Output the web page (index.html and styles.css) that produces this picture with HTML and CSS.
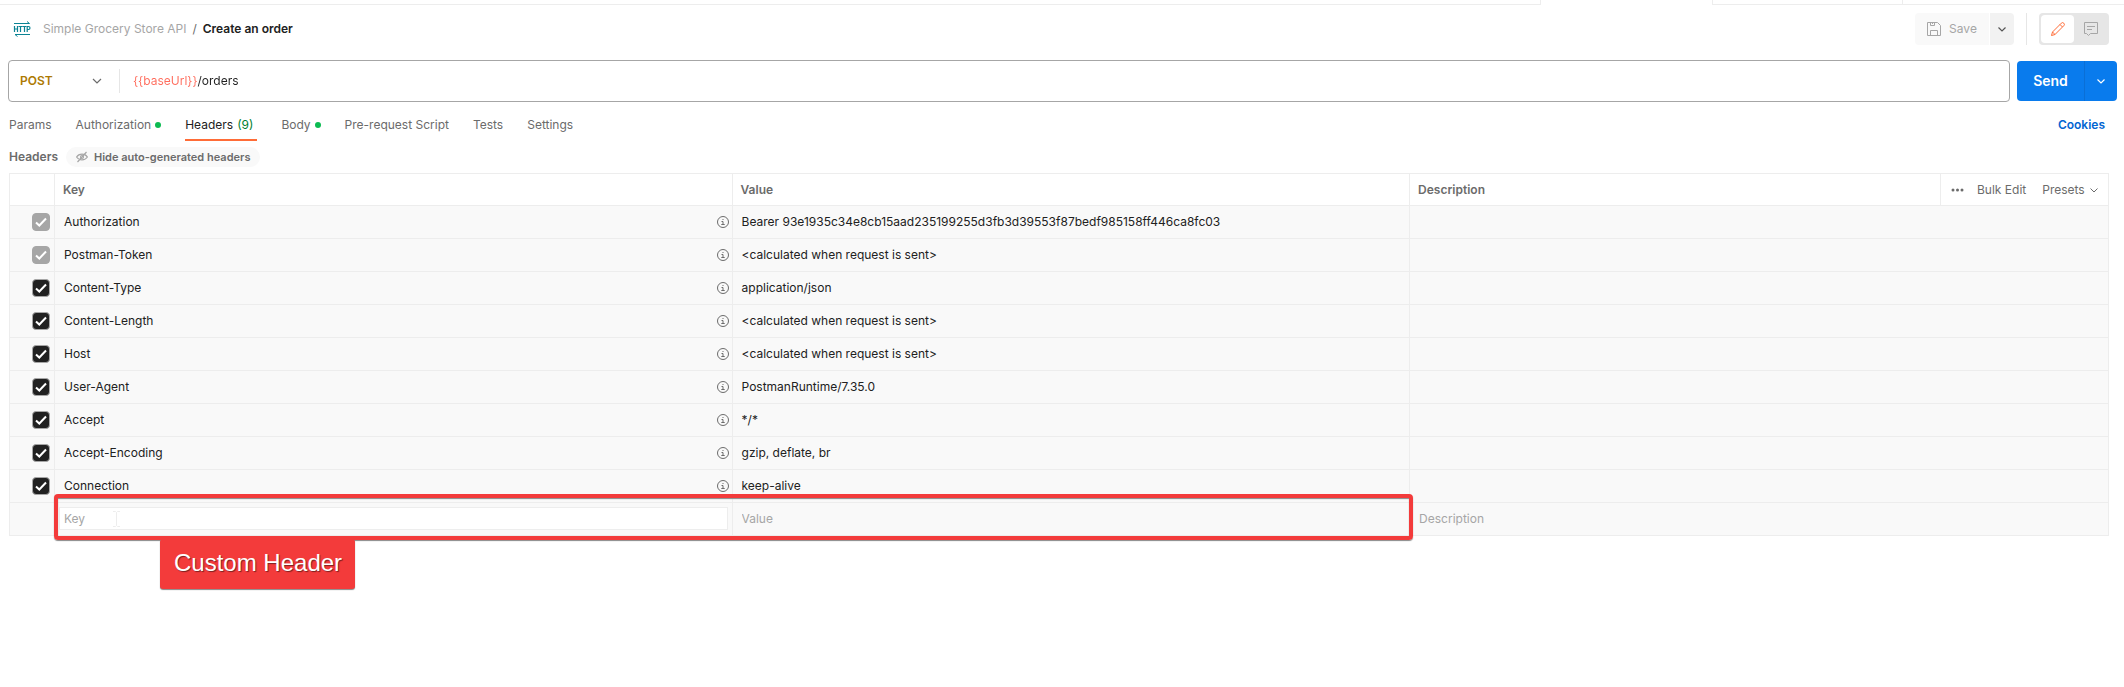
FILE: index.html
```html
<!DOCTYPE html>
<html lang="en">
<head>
<meta charset="utf-8">
<title>Create an order</title>
<link rel="stylesheet" href="styles.css">
</head>
<body>
<div class="tab-strip" aria-hidden="true">
  <span class="strip-before"></span><span class="strip-active"></span><span class="strip-next"></span><span class="strip-rest"></span>
</div>

<header class="title-bar">
  <svg class="http-icon" width="18" height="16" viewBox="0 0 18 16" fill="none" stroke="#0b8394">
    <path d="M1 2.500H16.500M14 .5L16.500 2.500M17 13.500H2M4.500 15.500L2 13.500"/>
    <path stroke-width="1.200" d="M1.500 5v6M4.500 5v6M1.500 8h3M5.500 5.500h4M7.500 5.500V11M9.700 5.500h3.600M11.500 5.500V11M14.200 11V5.500h1.300a1.500 1.500 0 0 1 0 3H14.200"/>
  </svg>
  <nav class="crumbs" aria-label="Breadcrumb">
    <a href="#collection">Simple Grocery Store API</a><span class="slash">/</span><strong>Create an order</strong>
  </nav>
  <div class="title-actions">
    <div class="save-group">
      <button class="save" type="button">
        <svg width="14" height="14" viewBox="0 0 14 14" fill="none" stroke="#a6a6a6"><path d="M.5 .5h10l3 3v10H.5zM3.500 13.500v-5h7v5M3.500 .5v3h4v-3M5.500 .5v1.500"/></svg>
        Save
      </button>
      <button class="save-more" type="button" aria-label="Save options">
        <svg width="8" height="5" viewBox="0 0 8 5" fill="none" stroke="#555" stroke-width="1.200"><path d="M.5 .5L4 4L7.500 .5"/></svg>
      </button>
    </div>
    <div class="mode-switch">
      <button class="mode active" type="button" aria-label="Build">
        <svg width="16" height="16" viewBox="0 0 16 16" fill="none" stroke="#ff6c37"><path d="M1.500 14.500L2.500 11L11.300 2.200a1.700 1.700 0 0 1 2.500 2.500L5 13.500zM2.500 11L5 13.500M10 3.500L12.500 6"/></svg>
      </button>
      <button class="mode" type="button" aria-label="Comments">
        <svg width="14" height="14" viewBox="0 0 14 14" fill="none" stroke="#a6a6a6"><path d="M.5 .5h13v11H6.500L4.500 13.500L2.500 11.500H.5zM3 4.500h8M3 7.500h5"/></svg>
      </button>
    </div>
  </div>
</header>

<form class="request-bar">
  <div class="url-box">
    <div class="method">
      <select aria-label="Method"><option>POST</option></select>
      <svg width="10" height="6" viewBox="0 0 10 6" fill="none" stroke="#6b6b6b" stroke-width="1.200"><path d="M1 1L5 5L9 1"/></svg>
    </div>
    <input class="url" type="text" aria-label="Request URL" value="{{baseUrl}}/orders">
  </div>
  <div class="send-group">
    <button class="send" type="button">Send</button>
    <button class="send-more" type="button" aria-label="Send options">
      <svg width="8" height="5" viewBox="0 0 8 5" fill="none" stroke="#fff" stroke-width="1.200"><path d="M.5 .5L4 4L7.500 .5"/></svg>
    </button>
  </div>
</form>

<nav class="tabs" aria-label="Request settings">
  <a href="#params">Params</a>
  <a href="#auth">Authorization<i class="dot"></i></a>
  <a class="current" href="#headers">Headers <span class="count">(9)</span></a>
  <a href="#body">Body<i class="dot"></i></a>
  <a href="#script">Pre-request Script</a>
  <a href="#tests">Tests</a>
  <a href="#settings">Settings</a>
  <a class="cookies" href="#cookies">Cookies</a>
</nav>

<main>
  <div class="section-head">
    <h2>Headers</h2>
    <button class="pill" type="button">
      <svg width="12" height="12" viewBox="0 0 12 12" fill="none" stroke="#a6a6a6" stroke-width="1.200"><path d="M.6 6C3 2.200 9 2.200 11.400 6C9 9.800 3 9.800 .6 6zM10.500 1L1.500 11"/><circle cx="6" cy="6" r="1.500"/></svg>
      Hide auto-generated headers
    </button>
  </div>

  <div class="table-wrap">
    <table>
      <colgroup><col class="c-check"><col class="c-key"><col class="c-value"><col><col class="c-tools"></colgroup>
      <thead>
        <tr>
          <th></th><th>Key</th><th>Value</th><th>Description</th>
          <th><div class="tools">
            <button type="button" aria-label="More"><svg width="13" height="4" viewBox="0 0 13 4" fill="#6b6b6b"><circle cx="2" cy="2" r="1.500"/><circle cx="6.500" cy="2" r="1.500"/><circle cx="11" cy="2" r="1.500"/></svg></button>
            <button type="button">Bulk Edit</button>
            <button class="presets" type="button">Presets<svg width="8" height="5" viewBox="0 0 8 5" fill="none" stroke="#6b6b6b"><path d="M.5 .5L4 4L7.500 .5"/></svg></button>
          </div></th>
        </tr>
      </thead>
      <tbody>
        <tr><td><input type="checkbox" checked disabled aria-label="Authorization"></td><td><div class="key">Authorization<svg class="info"><use href="#info"/></svg></div></td><td>Bearer 93e1935c34e8cb15aad235199255d3fb3d39553f87bedf985158ff446ca8fc03</td><td colspan="2"></td></tr>
        <tr><td><input type="checkbox" checked disabled aria-label="Postman-Token"></td><td><div class="key">Postman-Token<svg class="info"><use href="#info"/></svg></div></td><td>&lt;calculated when request is sent&gt;</td><td colspan="2"></td></tr>
        <tr><td><input type="checkbox" checked aria-label="Content-Type"></td><td><div class="key">Content-Type<svg class="info"><use href="#info"/></svg></div></td><td>application/json</td><td colspan="2"></td></tr>
        <tr><td><input type="checkbox" checked aria-label="Content-Length"></td><td><div class="key">Content-Length<svg class="info"><use href="#info"/></svg></div></td><td>&lt;calculated when request is sent&gt;</td><td colspan="2"></td></tr>
        <tr><td><input type="checkbox" checked aria-label="Host"></td><td><div class="key">Host<svg class="info"><use href="#info"/></svg></div></td><td>&lt;calculated when request is sent&gt;</td><td colspan="2"></td></tr>
        <tr><td><input type="checkbox" checked aria-label="User-Agent"></td><td><div class="key">User-Agent<svg class="info"><use href="#info"/></svg></div></td><td>PostmanRuntime/7.35.0</td><td colspan="2"></td></tr>
        <tr><td><input type="checkbox" checked aria-label="Accept"></td><td><div class="key">Accept<svg class="info"><use href="#info"/></svg></div></td><td>*/*</td><td colspan="2"></td></tr>
        <tr><td><input type="checkbox" checked aria-label="Accept-Encoding"></td><td><div class="key">Accept-Encoding<svg class="info"><use href="#info"/></svg></div></td><td>gzip, deflate, br</td><td colspan="2"></td></tr>
        <tr><td><input type="checkbox" checked aria-label="Connection"></td><td><div class="key">Connection<svg class="info"><use href="#info"/></svg></div></td><td>keep-alive</td><td colspan="2"></td></tr>
        <tr class="new-row"><td></td><td><input class="field boxed" type="text" placeholder="Key" aria-label="Key"></td><td><input class="field" type="text" placeholder="Value" aria-label="Value"></td><td colspan="2"><input class="field" type="text" placeholder="Description" aria-label="Description"></td></tr>
      </tbody>
    </table>
    <div class="callout"><span class="callout-label">Custom Header</span></div>
    <svg class="caret" width="7" height="16" viewBox="0 0 7 16" fill="none" stroke="#ededed"><path d="M0 .5h2.500l1 1l1-1H7M3.500 1.500v13M0 15.500h2.500l1-1l1 1H7"/></svg>
  </div>
</main>

<svg class="defs" width="0" height="0" aria-hidden="true">
  <symbol id="info" viewBox="0 0 12 12"><g fill="none" stroke="#6b6b6b"><circle cx="6" cy="6" r="5.500"/><path d="M4.500 5.500H6v3M4.300 8.500h3.400M5.500 3.500h1"/></g></symbol>
</svg>
</body>
</html>
```

FILE: styles.css
```css
* { box-sizing: border-box; }

body {
  min-height: 100vh;
  margin: 0;
  background: #fff;
  color: #212121;
  font: 12px/16px Inter, "Liberation Sans", sans-serif;
}

button, input, select { font: inherit; color: inherit; }
button { margin: 0; padding: 0; border: 0; background: none; cursor: pointer; }
a { color: inherit; text-decoration: none; }
svg { flex: none; display: block; }
.defs { position: absolute; }

.tab-strip { display: flex; height: 5px; }
.strip-before { flex: 1542; border-bottom: 1px solid #ededed; border-right: 1px solid #ededed; }
.strip-active { flex: 171; }
.strip-next { flex: 190; border: solid #ededed; border-width: 0 1px 1px; }
.strip-rest { flex: 221; border-bottom: 1px solid #ededed; }

.title-bar {
  display: flex;
  align-items: center;
  height: 48px;
  padding: 0 15px 0 13px;
}
.crumbs { display: flex; margin-left: 12px; color: #a6a6a6; }
.slash { padding: 0 6px; color: #6b6b6b; }
.crumbs strong { font-weight: 600; color: #212121; }
.title-actions { display: flex; margin-left: auto; }
.save-group { display: flex; gap: 1px; padding-right: 12px; border-right: 1px solid #e6e6e6; }
.save, .save-more { display: flex; align-items: center; justify-content: center; height: 32px; }
.save { gap: 8px; width: 74px; background: #f9f9f9; color: #a6a6a6; border-radius: 4px 0 0 4px; }
.save-more { width: 24px; background: #f2f2f2; border-radius: 0 4px 4px 0; }
.mode-switch { display: flex; width: 70px; padding: 2px; margin-left: 12px; background: #e6e6e6; border-radius: 4px; }
.mode { display: flex; flex: 1; align-items: center; justify-content: center; height: 28px; border-radius: 4px; }
.mode.active { background: #fff; }

.request-bar { display: flex; align-items: center; gap: 7px; padding: 7px 7px 0 8px; }
.url-box {
  display: flex;
  flex: 1;
  align-items: center;
  height: 42px;
  border: 1px solid #a6a6a6;
  border-radius: 4px;
}
.method { display: grid; align-items: center; width: 111px; height: 24px; border-right: 1px solid #e6e6e6; }
.method > * { grid-area: 1 / 1; }
.method select {
  width: 100%;
  padding: 0 0 0 11px;
  border: 0;
  background: none;
  appearance: none;
  color: #ad7a03;
  font-weight: 600;
}
.method svg { justify-self: end; margin-right: 17px; pointer-events: none; }
.url {
  flex: 1;
  padding: 0;
  margin-left: 13px;
  border: 0;
  outline: 0;
  color: transparent;
  background: linear-gradient(90deg, #ff6c5c 64px, #212121 64px) text;
  -webkit-background-clip: text;
}
.send-group { display: flex; width: 100px; height: 40px; background: #097bed; border-radius: 4px; color: #fff; }
.send { flex: 1; font-size: 14px; font-weight: 600; border-right: 1px solid #0a6fd6; }
.send-more { display: flex; align-items: center; justify-content: center; width: 32px; }

.tabs { display: flex; gap: 24px; padding: 6px 19px 0 9px; color: #6b6b6b; }
.tabs a { display: flex; align-items: center; height: 33px; padding-top: 2px; border-bottom: 2px solid transparent; }
.dot { width: 6px; height: 6px; margin-left: 4px; border-radius: 50%; background: #0cbb52; }
.tabs .current { gap: 4px; padding-right: 4px; color: #212121; border-color: #ff6c37; }
.count { color: #007f31; }
.tabs .cookies { margin-left: auto; color: #0265d2; font-weight: 600; }

main { padding: 0 15px 0 9px; }
.section-head { display: flex; align-items: center; gap: 8px; height: 32px; color: #6b6b6b; }
.section-head h2 { margin: 0; font-size: 12px; font-weight: 600; }
.pill {
  display: flex;
  align-items: center;
  gap: 6px;
  height: 20px;
  padding: 0 10px;
  border-radius: 10px;
  background: #f9f9f9;
  font-size: 11px;
  font-weight: 600;
}

.table-wrap { position: relative; }
table { width: 100%; border-collapse: collapse; table-layout: fixed; }
.c-check { width: 45px; }
.c-key { width: 32.28%; }
.c-value { width: 32.28%; }
.c-tools { width: 168px; }
th, td { height: 33px; border: 1px solid #ededed; text-align: left; white-space: nowrap; }
th { height: 32px; padding: 1px 8px 0; color: #6b6b6b; font-weight: 600; }
td { padding: 0 9px 1px; background: #f9f9f9; }
td:first-child { padding: 0 4px 1px 0; }
.tools { display: flex; align-items: center; gap: 13px; padding-left: 2px; }
.tools button { font-weight: 400; }
.presets { display: flex; align-items: center; gap: 5px; margin-left: 3px; }
.key { display: flex; align-items: center; justify-content: space-between; }
.info { width: 12px; height: 12px; margin-right: -6px; }

input[type="checkbox"] {
  appearance: none;
  display: block;
  width: 18px;
  height: 18px;
  margin: 0 0 0 auto;
  border: 1px solid #a6a6a6;
  border-radius: 4px;
  background: #212121 url("data:image/svg+xml,%3Csvg xmlns='http://www.w3.org/2000/svg' viewBox='0 0 16 16' fill='none' stroke='white' stroke-width='2'%3E%3Cpath d='M3 8.500L6.300 11.500L13 4.500'/%3E%3C/svg%3E") center / 16px no-repeat;
}
input[type="checkbox"]:disabled { background-color: #a6a6a6; }

.new-row td { padding: 0 4px 2px; }
.field {
  display: block;
  width: 100%;
  height: 23px;
  padding: 0 4px;
  border: 1px solid transparent;
  outline: 0;
  background: none;
}
.field::placeholder { color: #a6a6a6; opacity: 1; }
.field.boxed { background: #fff; border-color: #ededed; }

.callout {
  position: absolute;
  left: 45px;
  bottom: -4px;
  width: calc(64.56% + 3px);
  height: 46px;
  border: 4px solid #f33b3b;
  border-radius: 4px;
  box-shadow: 0 1px 1px #888, inset 0 1px 1px #888;
  pointer-events: none;
}
.callout-label {
  position: absolute;
  top: calc(100% + 3px);
  left: 102px;
  padding: 10px 13px 12px 14px;
  border-radius: 3px;
  background: #f33b3b;
  box-shadow: 0 1px 1px #888;
  color: #fff;
  font: 24px/28px "Liberation Sans", Arial, sans-serif;
  text-shadow: 1px 1px 1px #7a2020;
  white-space: nowrap;
}
.caret { position: absolute; left: 104px; bottom: 9px; }
```
